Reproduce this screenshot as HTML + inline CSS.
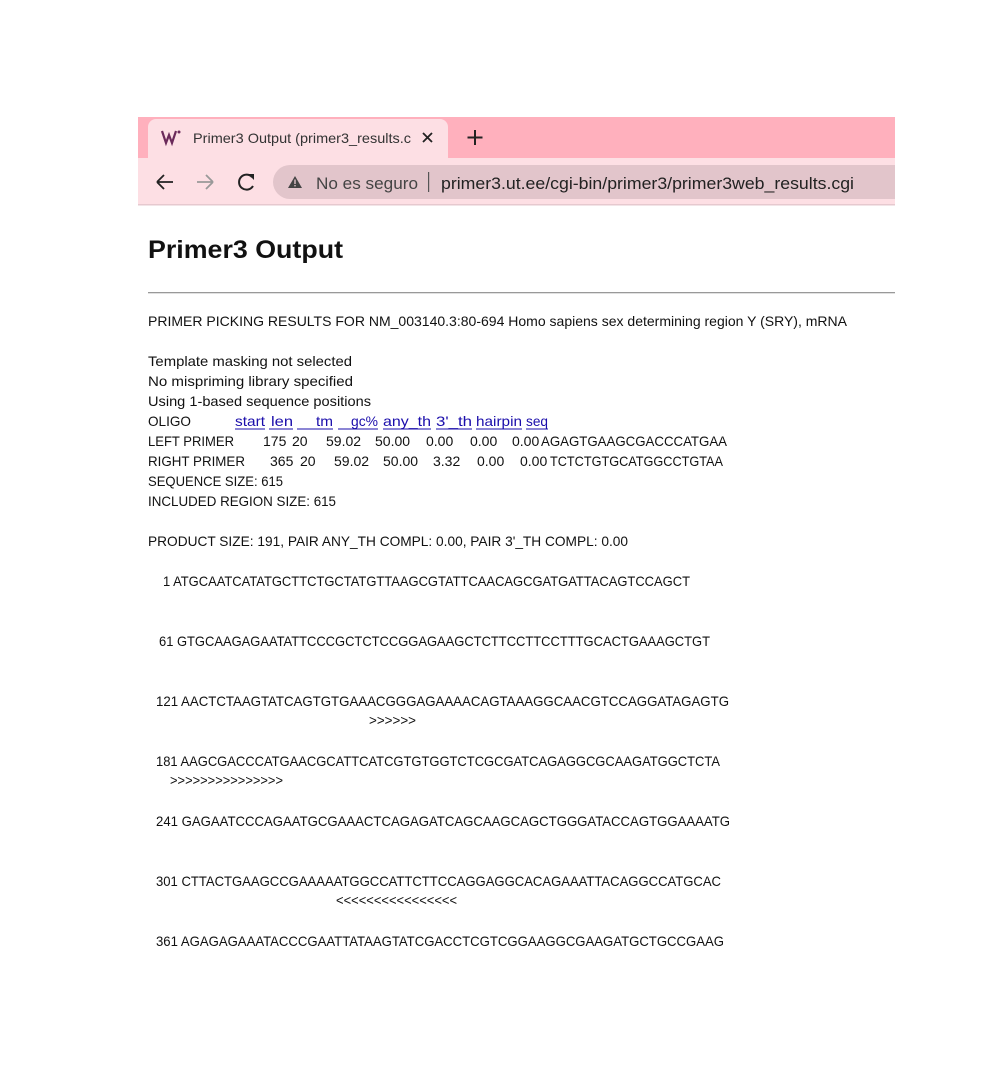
<!DOCTYPE html>
<html><head><meta charset="utf-8"><style>
html,body{margin:0;padding:0;background:#fff;}
svg{display:block;}
text{font-family:"Liberation Sans",sans-serif;fill:#111;}
.b{font-size:14px;}
.l{fill:#1a0dab;}
</style></head><body>
<svg width="1001" height="1081" viewBox="0 0 1001 1081" xmlns="http://www.w3.org/2000/svg">
<rect x="138" y="117" width="757" height="88" fill="#ffb0bd"/>
<path d="M148 158 V127 a8 8 0 0 1 8 -8 H440 a8 8 0 0 1 8 8 V158 Z" fill="#fddfe4"/>
<rect x="138" y="158" width="757" height="47" fill="#fddfe4"/>
<path d="M290 165 H895 V199 H290 a17 17 0 0 1 0 -34 Z" fill="#e2c5cb"/>
<rect x="138" y="204" width="757" height="1.5" fill="#e6c9cf"/>
<path d="M162 131 l4 12 l3 -8 l3 8 l4 -12" stroke="#6b2a5a" stroke-width="2.2" fill="none"/>
<circle cx="179" cy="132" r="1.5" fill="#6b2a5a"/>
<text x="193" y="143" font-size="14" textLength="218" lengthAdjust="spacingAndGlyphs" style="fill:#333">Primer3 Output (primer3_results.c</text>
<path d="M423 133 l9 9 M432 133 l-9 9" stroke="#222" stroke-width="1.8"/>
<path d="M475 130 v15 M467.5 137.5 h15" stroke="#222" stroke-width="2"/>
<path d="M157 182 h16 M157 182 l7 -7 M157 182 l7 7" stroke="#222" stroke-width="1.8" fill="none"/>
<path d="M197 182 h16 M213 182 l-7 -7 M213 182 l-7 7" stroke="#999" stroke-width="1.8" fill="none"/>
<path d="M252 177 A7.5 7.5 0 1 0 253 186" stroke="#222" stroke-width="2" fill="none"/>
<path d="M248 174 h6 v6 z" fill="#222"/>
<path d="M295 176 l7 12 h-14 z" fill="#444"/>
<rect x="294.3" y="179.5" width="1.4" height="4.5" fill="#e2c5cb"/><rect x="294.3" y="185" width="1.4" height="1.4" fill="#e2c5cb"/>
<text x="316" y="189" font-size="17" textLength="102" lengthAdjust="spacingAndGlyphs" style="fill:#444">No es seguro</text>
<rect x="428" y="172" width="1.2" height="20" fill="#555"/>
<text x="441" y="189" font-size="17" textLength="413" lengthAdjust="spacingAndGlyphs" style="fill:#222">primer3.ut.ee/cgi-bin/primer3/primer3web_results.cgi</text>
<text x="148" y="258" font-size="25" font-weight="bold" textLength="195" lengthAdjust="spacingAndGlyphs">Primer3 Output</text>
<rect x="148" y="292" width="747" height="1.3" fill="#999"/>
<g class="b">
<text class="b" x="148" y="326" textLength="699" lengthAdjust="spacingAndGlyphs">PRIMER PICKING RESULTS FOR NM_003140.3:80-694 Homo sapiens sex determining region Y (SRY), mRNA</text>
<text class="b" x="148" y="366" textLength="204" lengthAdjust="spacingAndGlyphs">Template masking not selected</text>
<text class="b" x="148" y="386" textLength="205" lengthAdjust="spacingAndGlyphs">No mispriming library specified</text>
<text class="b" x="148" y="406" textLength="223" lengthAdjust="spacingAndGlyphs">Using 1-based sequence positions</text>
<text class="b" x="148" y="426" textLength="43" lengthAdjust="spacingAndGlyphs">OLIGO</text>
<text class="b l" x="235" y="426" textLength="30" lengthAdjust="spacingAndGlyphs">start</text>
<text class="b l" x="271" y="426" textLength="22" lengthAdjust="spacingAndGlyphs">len</text>
<text class="b l" x="316" y="426" textLength="17" lengthAdjust="spacingAndGlyphs">tm</text>
<text class="b l" x="351" y="426" textLength="27" lengthAdjust="spacingAndGlyphs">gc%</text>
<text class="b l" x="383" y="426" textLength="48" lengthAdjust="spacingAndGlyphs">any_th</text>
<text class="b l" x="436" y="426" textLength="36" lengthAdjust="spacingAndGlyphs">3'_th</text>
<text class="b l" x="476" y="426" textLength="46" lengthAdjust="spacingAndGlyphs">hairpin</text>
<text class="b l" x="526" y="426" textLength="22" lengthAdjust="spacingAndGlyphs">seq</text>
<path d="M235 429h30M269 429h24M297 429h36M338 429h40M383 429h48M436 429h36M476 429h46M526 429h22" stroke="#1a0dab" stroke-width="1"/>
<text class="b" x="148" y="446" textLength="86" lengthAdjust="spacingAndGlyphs">LEFT PRIMER</text>
<text class="b" x="263" y="446">175</text><text class="b" x="292" y="446">20</text>
<text class="b" x="326" y="446">59.02</text><text class="b" x="375" y="446">50.00</text>
<text class="b" x="426" y="446">0.00</text><text class="b" x="470" y="446">0.00</text>
<text class="b" x="512" y="446">0.00</text>
<text class="b" x="541" y="446" textLength="186" lengthAdjust="spacingAndGlyphs">AGAGTGAAGCGACCCATGAA</text>
<text class="b" x="148" y="466" textLength="97" lengthAdjust="spacingAndGlyphs">RIGHT PRIMER</text>
<text class="b" x="270" y="466">365</text><text class="b" x="300" y="466">20</text>
<text class="b" x="334" y="466">59.02</text><text class="b" x="383" y="466">50.00</text>
<text class="b" x="433" y="466">3.32</text><text class="b" x="477" y="466">0.00</text>
<text class="b" x="520" y="466">0.00</text>
<text class="b" x="550" y="466" textLength="173" lengthAdjust="spacingAndGlyphs">TCTCTGTGCATGGCCTGTAA</text>
<text class="b" x="148" y="486" textLength="135" lengthAdjust="spacingAndGlyphs">SEQUENCE SIZE: 615</text>
<text class="b" x="148" y="506" textLength="188" lengthAdjust="spacingAndGlyphs">INCLUDED REGION SIZE: 615</text>
<text class="b" x="148" y="546" textLength="480" lengthAdjust="spacingAndGlyphs">PRODUCT SIZE: 191, PAIR ANY_TH COMPL: 0.00, PAIR 3'_TH COMPL: 0.00</text>
<text class="b" x="163" y="586" textLength="527" lengthAdjust="spacingAndGlyphs">1 ATGCAATCATATGCTTCTGCTATGTTAAGCGTATTCAACAGCGATGATTACAGTCCAGCT</text>
<text class="b" x="159" y="646" textLength="551" lengthAdjust="spacingAndGlyphs">61 GTGCAAGAGAATATTCCCGCTCTCCGGAGAAGCTCTTCCTTCCTTTGCACTGAAAGCTGT</text>
<text class="b" x="156" y="706" textLength="573" lengthAdjust="spacingAndGlyphs">121 AACTCTAAGTATCAGTGTGAAACGGGAGAAAACAGTAAAGGCAACGTCCAGGATAGAGTG</text>
<text class="b" x="369" y="725" font-size="11" textLength="47" lengthAdjust="spacingAndGlyphs">&gt;&gt;&gt;&gt;&gt;&gt;</text>
<text class="b" x="156" y="766" textLength="564" lengthAdjust="spacingAndGlyphs">181 AAGCGACCCATGAACGCATTCATCGTGTGGTCTCGCGATCAGAGGCGCAAGATGGCTCTA</text>
<text class="b" x="170" y="785" font-size="11" textLength="113" lengthAdjust="spacingAndGlyphs">&gt;&gt;&gt;&gt;&gt;&gt;&gt;&gt;&gt;&gt;&gt;&gt;&gt;&gt;&gt;</text>
<text class="b" x="156" y="826" textLength="574" lengthAdjust="spacingAndGlyphs">241 GAGAATCCCAGAATGCGAAACTCAGAGATCAGCAAGCAGCTGGGATACCAGTGGAAAATG</text>
<text class="b" x="156" y="886" textLength="565" lengthAdjust="spacingAndGlyphs">301 CTTACTGAAGCCGAAAAATGGCCATTCTTCCAGGAGGCACAGAAATTACAGGCCATGCAC</text>
<text class="b" x="336" y="905" font-size="11" textLength="121" lengthAdjust="spacingAndGlyphs">&lt;&lt;&lt;&lt;&lt;&lt;&lt;&lt;&lt;&lt;&lt;&lt;&lt;&lt;&lt;&lt;</text>
<text class="b" x="156" y="946" textLength="568" lengthAdjust="spacingAndGlyphs">361 AGAGAGAAATACCCGAATTATAAGTATCGACCTCGTCGGAAGGCGAAGATGCTGCCGAAG</text>
</g>
</svg>
</body></html>
